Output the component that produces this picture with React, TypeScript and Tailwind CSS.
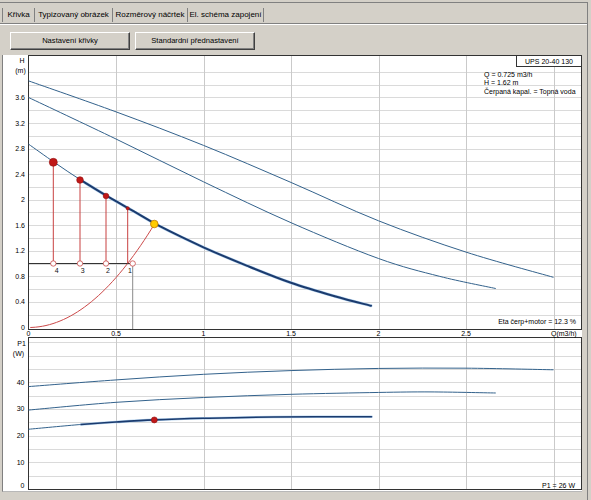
import React from 'react';

type Pt = [number, number];

// plot scales (page pixel coords, svg uses the same via viewBox)
const X = (q: number) => 28.5 + 175 * q;
const YH = (h: number) => 327.5 - 63.9 * h;
const YP = (p: number) => 489 - 2.667 * p;

function smoothPath(pts: Pt[]) {
  const f = (n: number) => n.toFixed(2);
  let d = `M${f(pts[0][0])},${f(pts[0][1])}`;
  for (let i = 0; i < pts.length - 1; i++) {
    const p0 = pts[i - 1] ?? pts[i];
    const p1 = pts[i];
    const p2 = pts[i + 1];
    const p3 = pts[i + 2] ?? p2;
    const c1x = p1[0] + (p2[0] - p0[0]) / 6;
    const c1y = p1[1] + (p2[1] - p0[1]) / 6;
    const c2x = p2[0] - (p3[0] - p1[0]) / 6;
    const c2y = p2[1] - (p3[1] - p1[1]) / 6;
    d += ` C${f(c1x)},${f(c1y)} ${f(c2x)},${f(c2y)} ${f(p2[0])},${f(p2[1])}`;
  }
  return d;
}

const hPath = (data: Pt[]) => smoothPath(data.map(([q, h]) => [X(q), YH(h)] as Pt));
const pPath = (data: Pt[]) => smoothPath(data.map(([q, p]) => [X(q), YP(p)] as Pt));

const hTop: Pt[] = [[0, 3.86], [0.5, 3.375], [1, 2.85], [1.5, 2.27], [2, 1.67], [2.5, 1.18], [3, 0.785]];
const hMid: Pt[] = [[0, 3.6], [0.5, 2.95], [1, 2.28], [1.5, 1.64], [2, 1.08], [2.35, 0.8], [2.67, 0.61]];
const hLow: Pt[] = [
  [0, 2.87], [0.15, 2.58], [0.3, 2.305], [0.45, 2.055], [0.6, 1.82], [0.75, 1.585],
  [1, 1.255], [1.25, 0.965], [1.5, 0.7], [1.75, 0.49], [1.957, 0.34],
];

const pTop: Pt[] = [[0, 38.4], [0.5, 40.9], [1, 43.0], [1.5, 44.4], [2, 45.2], [2.5, 45.3], [3, 44.7]];
const pMid: Pt[] = [[0, 29.6], [0.5, 32.5], [1, 34.3], [1.5, 35.5], [2, 36.2], [2.3, 36.4], [2.67, 36.0]];
const pLow: Pt[] = [[0, 22.4], [0.3, 24.2], [0.5, 25.1], [0.72, 25.9], [1, 26.5], [1.4, 27.0], [1.96, 27.1]];

const parabola = Array.from({ length: 36 }, (_, i) => {
  const q = 0.02 * (i + 1);
  return `${X(q).toFixed(2)},${YH(3.125 * q * q).toFixed(2)}`;
}).join(' ');

const qTicks = [0.5, 1, 1.5, 2, 2.5, 3];
const hGrid = Array.from({ length: 20 }, (_, i) => 0.2 * (i + 1));
const pGrid = Array.from({ length: 11 }, (_, i) => 5 * (i + 1));

const thin = '#33628c';
const thick = '#1b3b6e';
const red = '#c01818';

const font = { fontFamily: '"Liberation Sans", Arial, sans-serif', fontSize: 7 };

function Chart() {
  return (
    <svg width={579} height={436} viewBox="3 55 579 436" className="block" style={font}>
      {/* upper grid */}
      {hGrid.map((h) => (
        <line key={'hg' + h} x1={28.5} x2={581.5} y1={Math.round(YH(h)) + 0.5} y2={Math.round(YH(h)) + 0.5} stroke="#dadada" />
      ))}
      {qTicks.map((q) => (
        <line key={'vg' + q} x1={Math.round(X(q)) + 0.5} x2={Math.round(X(q)) + 0.5} y1={55.5} y2={329.5} stroke="#cacaca" />
      ))}
      {/* lower grid */}
      {pGrid.map((p) => (
        <line key={'pg' + p} x1={28.5} x2={581.5} y1={Math.round(YP(p)) + 0.5} y2={Math.round(YP(p)) + 0.5} stroke="#dadada" />
      ))}
      {qTicks.map((q) => (
        <line key={'vl' + q} x1={Math.round(X(q)) + 0.5} x2={Math.round(X(q)) + 0.5} y1={337.5} y2={489.5} stroke="#cacaca" />
      ))}

      {/* frames */}
      <rect x={28.5} y={55.5} width={553} height={274} fill="none" stroke="#333" />
      <rect x={28.5} y={337.5} width={553} height={152} fill="none" stroke="#333" />

      {/* upper curves */}
      <path d={hPath(hTop)} fill="none" stroke={thin} strokeWidth={1} />
      <path d={hPath(hMid)} fill="none" stroke={thin} strokeWidth={1} />
      <path d={hPath(hLow)} fill="none" stroke={thin} strokeWidth={1} />
      <path d={hPath(hLow.slice(2))} fill="none" stroke="#b4d2ee" strokeWidth={3} strokeLinecap="round" />
      <path d={hPath(hLow.slice(2))} fill="none" stroke={thick} strokeWidth={2} strokeLinecap="round" />

      {/* system curve and operating points */}
      <polyline points={`${X(0.01)},${YH(0.0003)} ${parabola}`} fill="none" stroke="#cc4a4a" strokeWidth={1} />
      <line x1={28.5} x2={130} y1={263.5} y2={263.5} stroke="#333" />
      <line x1={132.7} x2={132.7} y1={266} y2={329} stroke="#8a8a8a" />
      {[
        [53.3, 162.3, 4],
        [80, 180, 3.3],
        [106, 196, 2.8],
        [127.7, 208.3, 1.6],
      ].map(([x, y, r]) => (
        <g key={'rp' + x}>
          <line x1={x} x2={x} y1={y} y2={263.5} stroke="#c84040" />
          <circle cx={x} cy={y} r={r} fill={red} stroke="#901010" strokeWidth={0.6} />
        </g>
      ))}
      {[53.3, 80, 106, 132.7].map((x) => (
        <circle key={'oc' + x} cx={x} cy={263.5} r={2.7} fill="#fff" stroke="#c84848" strokeWidth={0.8} />
      ))}
      {[
        ['4', 56.7],
        ['3', 82.7],
        ['2', 108],
        ['1', 130],
      ].map(([t, x]) => (
        <text key={'n' + t} x={x as number} y={272.5} textAnchor="middle" fill="#111">
          {t}
        </text>
      ))}
      <circle cx={154.3} cy={224} r={3.8} fill="#ffcc00" stroke="#c07800" strokeWidth={0.8} />

      {/* lower curves */}
      <path d={pPath(pTop)} fill="none" stroke={thin} strokeWidth={1} />
      <path d={pPath(pMid)} fill="none" stroke={thin} strokeWidth={1} />
      <path d={pPath(pLow)} fill="none" stroke={thin} strokeWidth={1} />
      <path d={pPath(pLow.slice(1))} fill="none" stroke="#b4d2ee" strokeWidth={2.6} strokeLinecap="round" />
      <path d={pPath(pLow.slice(1))} fill="none" stroke={thick} strokeWidth={1.6} strokeLinecap="round" />
      <circle cx={154.3} cy={YP(25.9)} r={3} fill={red} stroke="#901010" strokeWidth={0.6} />

      {/* upper labels */}
      <text x={22} y={62.5} textAnchor="middle">H</text>
      <text x={20.5} y={72.5} textAnchor="middle">(m)</text>
      {[3.6, 3.2, 2.8, 2.4, 2, 1.6, 1.2, 0.8, 0.4, 0].map((h) => (
        <text key={'hl' + h} x={25} y={YH(h) + 2.5} textAnchor="end">
          {String(Math.round(h * 10) / 10)}
        </text>
      ))}
      {[0, 0.5, 1, 1.5, 2, 2.5].map((q) => (
        <text key={'ql' + q} x={X(q)} y={336} textAnchor="middle">
          {String(q)}
        </text>
      ))}
      <text x={551} y={336}>Q(m3/h)</text>

      <rect x={516.5} y={55.5} width={65} height={11} fill="#fff" stroke="#333" />
      <text x={549} y={63.5} textAnchor="middle">UPS 20-40 130</text>
      <text x={484} y={76.5}>Q = 0.725 m3/h</text>
      <text x={484} y={85.2}>H = 1.62 m</text>
      <text x={484} y={94.2}>Čerpaná kapal. = Topná voda</text>
      <text x={576} y={324} textAnchor="end">Eta čerp+motor = 12.3 %</text>

      {/* lower labels */}
      <text x={21.5} y={345.5} textAnchor="middle">P1</text>
      <text x={18.5} y={356} textAnchor="middle">(W)</text>
      {[40, 30, 20, 10].map((p) => (
        <text key={'pl' + p} x={24.5} y={YP(p) + 2.5} textAnchor="end">
          {String(p)}
        </text>
      ))}
      <text x={24.5} y={487.5} textAnchor="end">0</text>
      <text x={575} y={487.5} textAnchor="end">P1 = 26 W</text>
    </svg>
  );
}

const tabs = [
  { label: 'Křivka', w: 'w-[33px] border-l' },
  { label: 'Typizovaný obrázek', w: 'w-[78px]' },
  { label: 'Rozměrový náčrtek', w: 'w-[75px]' },
  { label: 'El. schéma zapojení', w: 'w-[76px]' },
];

export default function App() {
  return (
    <div
      className="w-[591px] h-[500px] bg-[#d4d0c8] overflow-hidden text-black"
      style={{ fontFamily: '"Liberation Sans", Arial, sans-serif' }}
    >
      <div className="h-[2px]" />
      <div className="w-[588px] h-[498px] border-t border-r border-[#808080] flex flex-col">
        <div className="h-[5px]" />
        {/* tab strip */}
        <div className="h-[14px] pl-[2px] flex">
          {tabs.map((t) => (
            <div
              key={t.label}
              className={`${t.w} h-full border-r border-[#808080] flex items-center justify-center text-[8px] leading-none whitespace-nowrap`}
            >
              {t.label}
            </div>
          ))}
        </div>
        <div className="h-[1px]" />
        <div className="h-[1px] bg-[#808080]" />
        <div className="h-[1px] bg-white" />

        {/* buttons */}
        <div className="mt-[7px] pl-[10px] flex gap-[5px]">
          <button className="w-[120px] h-[18px] bg-[#d4d0c8] border border-t-white border-l-white border-b-[#404040] border-r-[#404040] shadow-[inset_-1px_-1px_0_#808080] text-[7.6px] leading-none">
            Nastavení křivky
          </button>
          <button className="w-[120px] h-[18px] bg-[#d4d0c8] border border-t-white border-l-white border-b-[#404040] border-r-[#404040] shadow-[inset_-1px_-1px_0_#808080] text-[7.6px] leading-none">
            Standardní přednastavení
          </button>
        </div>

        {/* chart panel */}
        <div className="mt-[5px] ml-[2px] w-[580px] h-[437px] border-l border-b border-l-[#808080] border-b-[#b8b8b8] bg-white">
          <Chart />
        </div>
      </div>
    </div>
  );
}
